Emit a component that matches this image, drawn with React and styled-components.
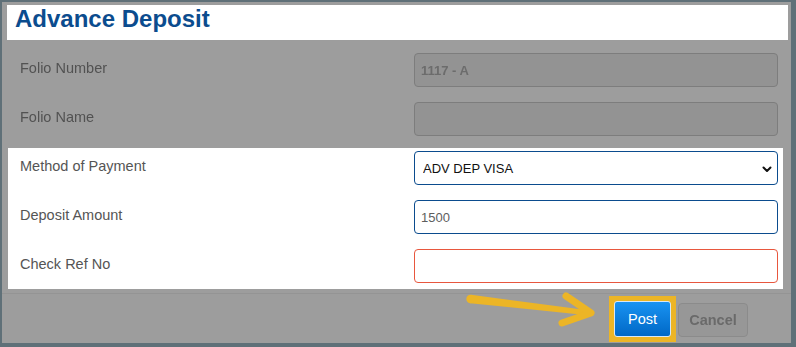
import React from "react";
import styled, { createGlobalStyle } from "styled-components";

const Global = createGlobalStyle`
  html, body { margin: 0; padding: 0; background: #9d9d9d; }
  body { font-family: "Liberation Sans", Arial, Helvetica, sans-serif; }
  * { box-sizing: border-box; }
`;

const Frame = styled.div`
  position: relative;
  width: 796px;
  height: 347px;
  background: #9d9d9d;
  border-style: solid;
  border-color: #5f7078;
  border-width: 2px 5px 4px 2px;
  display: flex;
  flex-direction: column;
  overflow: hidden;
`;

const Header = styled.div`
  margin: 3px 3px 0 5px;
  height: 35px;
  background: #ffffff;
  padding-left: 8px;
`;

const Title = styled.h1`
  margin: 0;
  font-size: 24px;
  line-height: 27px;
  font-weight: 700;
  color: #0b4c8e;
`;

const Body = styled.div`
  padding: 13px 13px 0 18px;
  display: flex;
  flex-direction: column;
`;

const Dimmed = styled.div`
  display: flex;
  flex-direction: column;
  gap: 15px;
  filter: blur(0.6px);
`;

const Highlight = styled.div`
  margin: 12px -5px 0 -12px;
  padding: 3px 5px 6px 12px;
  background: #ffffff;
  display: flex;
  flex-direction: column;
  gap: 15px;
`;

const Row = styled.div`
  display: grid;
  grid-template-columns: 1fr 364px;
  align-items: start;
`;

const Label = styled.label`
  padding-top: 7px;
  font-size: 14.5px;
  color: ${(p) => (p.$dim ? "#525252" : "#555555")};
`;

const Field = styled.input`
  width: 364px;
  height: 34px;
  margin: 0;
  padding: 0 6px;
  font-family: inherit;
  font-size: 13px;
  font-weight: ${(p) => (p.$dim ? 700 : 400)};
  color: ${(p) => (p.$dim ? "#6c6c6c" : "#5e5e5e")};
  background: ${(p) => (p.$dim ? "#939393" : "#ffffff")};
  border: 1px solid
    ${(p) =>
      p.$dim ? "#7d7d7d" : p.$error ? "#e8573e" : "#0b4c8e"};
  border-radius: 4px;
  outline: none;
`;

const SelectWrap = styled.div`
  position: relative;
  width: 364px;
  height: 34px;
`;

const Select = styled.select`
  appearance: none;
  -webkit-appearance: none;
  width: 100%;
  height: 100%;
  margin: 0;
  padding: 0 8px;
  font-family: inherit;
  font-size: 13px;
  color: #111111;
  background: #ffffff;
  border: 1px solid #0b4c8e;
  border-radius: 4px;
  outline: none;
`;

const Chevron = styled.svg`
  position: absolute;
  right: 6px;
  top: 15px;
  pointer-events: none;
`;

const Footer = styled.div`
  margin-top: 4px;
  border-top: 1px solid #949494;
  padding: 2px 43px 0 0;
  display: flex;
  justify-content: flex-end;
  align-items: flex-start;
  gap: 2px;
`;

const Spot = styled.div`
  padding: 5px;
  background: #ecb526;
`;

const PostButton = styled.button`
  width: 57px;
  height: 36px;
  margin: 0;
  padding: 0;
  font-family: inherit;
  font-size: 14.5px;
  color: #ffffff;
  background: linear-gradient(#1993f2, #0068c6);
  border: 1px solid #d8e8f6;
  border-radius: 3px;
`;

const CancelButton = styled.button`
  width: 70px;
  height: 34px;
  margin: 7px 0 0 0;
  padding: 0;
  font-family: inherit;
  font-size: 14.5px;
  font-weight: 700;
  color: #6a6a6a;
  background: #979797;
  border: 1px solid #8b8b8b;
  border-radius: 4px;
  filter: blur(0.6px);
`;

const Arrow = styled.svg`
  position: absolute;
  left: -2px;
  top: -2px;
  pointer-events: none;
`;

export default function App() {
  return (
    <>
      <Global />
      <Frame>
        <Header>
          <Title>Advance Deposit</Title>
        </Header>
        <Body>
          <Dimmed>
            <Row>
              <Label $dim>Folio Number</Label>
              <Field $dim readOnly defaultValue="1117 - A" />
            </Row>
            <Row>
              <Label $dim>Folio Name</Label>
              <Field $dim readOnly defaultValue="" />
            </Row>
          </Dimmed>
          <Highlight>
            <Row>
              <Label>Method of Payment</Label>
              <SelectWrap>
                <Select defaultValue="ADV DEP VISA">
                  <option>ADV DEP VISA</option>
                </Select>
                <Chevron width="10" height="7" viewBox="0 0 10 7">
                  <path d="M1.5 1.5 L5 5 L8.5 1.5" fill="none" stroke="#111" strokeWidth="2" strokeLinecap="round" strokeLinejoin="round" />
                </Chevron>
              </SelectWrap>
            </Row>
            <Row>
              <Label>Deposit Amount</Label>
              <Field defaultValue="1500" />
            </Row>
            <Row>
              <Label>Check Ref No</Label>
              <Field $error defaultValue="" />
            </Row>
          </Highlight>
        </Body>
        <Footer>
          <Spot>
            <PostButton>Post</PostButton>
          </Spot>
          <CancelButton>Cancel</CancelButton>
        </Footer>
        <Arrow width="796" height="347" viewBox="0 0 796 347">
          <path d="M471 294.8 L590 310.5 L590 315.5 L470 303.2 Z" fill="#ecb526" />
          <circle cx="470.5" cy="299" r="4.2" fill="#ecb526" />
          <path d="M566 296 L591 313 L562 323" fill="none" stroke="#ecb526" strokeWidth="7" strokeLinecap="round" strokeLinejoin="round" />
        </Arrow>
      </Frame>
    </>
  );
}
